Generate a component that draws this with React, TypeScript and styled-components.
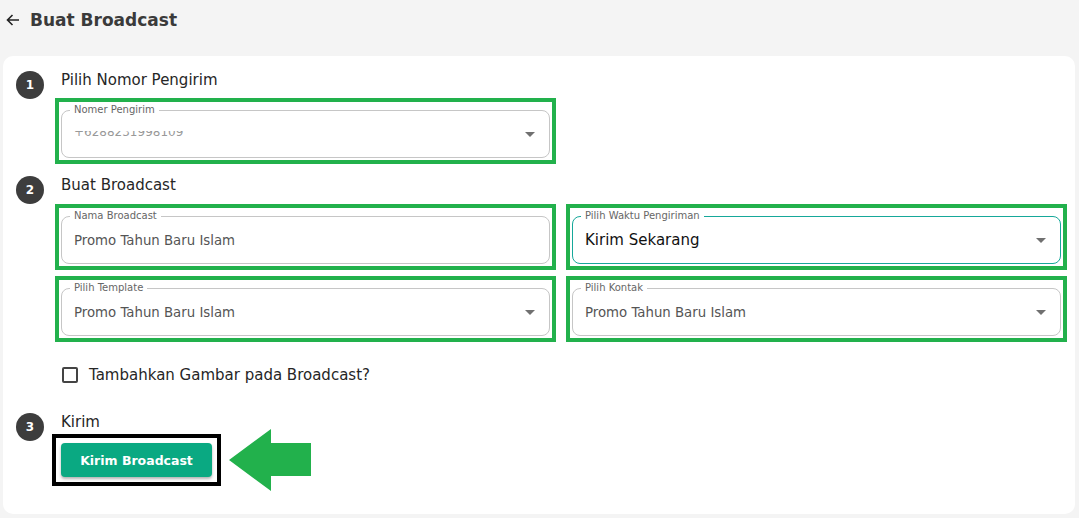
import styled, { createGlobalStyle } from "styled-components";

const GlobalStyle = createGlobalStyle`
    body {
        margin: 0;
        background: #f4f4f4;
        font-family: "DejaVu Sans", "Noto Sans", sans-serif;
        color: #333;
    }
`;

const Page = styled.div`
    width: 1079px;
    height: 518px;
    overflow: hidden;
`;

const Header = styled.header`
    height: 40px;
    display: flex;
    align-items: center;
    gap: 9px;
    padding-left: 5px;
`;

const Title = styled.h1`
    margin: 0;
    font-size: 17px;
    font-weight: 700;
    color: #3a3a3a;
`;

const Card = styled.section`
    margin: 16px 4px 0 3px;
    background: white;
    border-radius: 10px;
    padding: 15px 14px 37px 13px;
`;

const Step = styled.div<{ $gap?: number }>`
    display: grid;
    grid-template-columns: 28px 1fr;
    column-gap: 17px;
    margin-top: ${(p) => p.$gap ?? 0}px;
`;

const Circle = styled.div`
    width: 28px;
    height: 28px;
    border-radius: 50%;
    background: #3d3d3d;
    color: white;
    font-size: 12px;
    font-weight: 700;
    display: flex;
    align-items: center;
    justify-content: center;
`;

const StepTitle = styled.div`
    font-size: 15px;
    line-height: 18px;
    color: #262626;
`;

const Body = styled.div<{ $top: number }>`
    grid-column: 2;
    margin-top: ${(p) => p.$top}px;
`;

const Grid = styled.div`
    display: grid;
    grid-template-columns: 1fr 1fr;
    column-gap: 22px;
    row-gap: 18px;
`;

// green annotation frame drawn round a field
const Mark = styled.div`
    padding-top: 6px;
    outline: 4px solid #22b14c;
    outline-offset: 2px;
`;

const Field = styled.div<{ $focus?: boolean }>`
    position: relative;
    box-sizing: border-box;
    height: 48px;
    border: 1px solid ${(p) => (p.$focus ? "#16a89a" : "#c6c6c6")};
    border-radius: 8px;
    display: flex;
    align-items: center;
    padding: 0 12px;
`;

const Legend = styled.span`
    position: absolute;
    top: -7px;
    left: 8px;
    padding: 0 4px;
    background: white;
    font-size: 10px;
    line-height: 12px;
    color: #666;
    white-space: nowrap;
`;

const Value = styled.span<{ $strong?: boolean }>`
    flex: 1;
    font-size: ${(p) => (p.$strong ? 15 : 13.3)}px;
    color: ${(p) => (p.$strong ? "#111" : "#555")};
`;

const Clipped = styled.span`
    flex: 1;
    height: 8px;
    overflow: hidden;
    display: flex;
    align-items: flex-end;
    margin-top: 2px;
    font-size: 12px;
    line-height: 14px;
    color: #999;
`;

const Caret = styled.span`
    width: 0;
    height: 0;
    border-left: 5px solid transparent;
    border-right: 5px solid transparent;
    border-top: 5px solid #707070;
    margin-right: 2px;
`;

const CheckRow = styled.label`
    margin-top: 27px;
    height: 24px;
    display: flex;
    align-items: center;
    gap: 11px;
    font-size: 15px;
    color: #262626;
`;

const Box = styled.span`
    box-sizing: border-box;
    width: 16px;
    height: 16px;
    margin-left: 1px;
    border: 2px solid #444;
    border-radius: 2px;
`;

const SendRow = styled.div`
    display: flex;
    align-items: center;
    gap: 17px;

    svg {
        margin: -14px 0;
    }
`;

// black annotation frame round the button
const ButtonFrame = styled.div`
    display: flex;
    outline: 4px solid #000;
    outline-offset: 5px;
`;

const Button = styled.button`
    width: 151px;
    height: 34px;
    border: none;
    border-radius: 4px;
    background: #0aa982;
    color: white;
    font-family: inherit;
    font-size: 12.5px;
    font-weight: 700;
    box-shadow: 0 2px 3px rgba(0, 0, 0, 0.3);
`;

function Dropdown({ label, value, focus, strong }: { label: string; value: string; focus?: boolean; strong?: boolean }) {
    return (
        <Mark>
            <Field $focus={focus}>
                <Legend>{label}</Legend>
                <Value $strong={strong}>{value}</Value>
                <Caret />
            </Field>
        </Mark>
    );
}

function App() {
    return (
        <Page>
            <GlobalStyle />
            <Header>
                <svg width="16" height="16" viewBox="0 0 16 16" fill="none" stroke="#222" strokeWidth="1.6">
                    <path d="M14 8H2.5M7.5 3L2.5 8l5 5" />
                </svg>
                <Title>Buat Broadcast</Title>
            </Header>
            <Card>
                <Step>
                    <Circle>1</Circle>
                    <StepTitle>Pilih Nomor Pengirim</StepTitle>
                    <Body $top={5}>
                        <Grid>
                            <Mark>
                                <Field>
                                    <Legend>Nomer Pengirim</Legend>
                                    <Clipped>+6288231998109</Clipped>
                                    <Caret />
                                </Field>
                            </Mark>
                        </Grid>
                    </Body>
                </Step>
                <Step $gap={18}>
                    <Circle>2</Circle>
                    <StepTitle>Buat Broadcast</StepTitle>
                    <Body $top={6}>
                        <Grid>
                            <Mark>
                                <Field>
                                    <Legend>Nama Broadcast</Legend>
                                    <Value>Promo Tahun Baru Islam</Value>
                                </Field>
                            </Mark>
                            <Dropdown label="Pilih Waktu Pengiriman" value="Kirim Sekarang" focus strong />
                            <Dropdown label="Pilih Template" value="Promo Tahun Baru Islam" />
                            <Dropdown label="Pilih Kontak" value="Promo Tahun Baru Islam" />
                        </Grid>
                        <CheckRow>
                            <Box />
                            Tambahkan Gambar pada Broadcast?
                        </CheckRow>
                    </Body>
                </Step>
                <Step $gap={26}>
                    <Circle>3</Circle>
                    <StepTitle>Kirim</StepTitle>
                    <Body $top={2}>
                        <SendRow>
                            <ButtonFrame>
                                <Button>Kirim Broadcast</Button>
                            </ButtonFrame>
                            <svg width="82" height="62" viewBox="0 0 82 62">
                                <path d="M0 31L42 0V14H82V47H42V62Z" fill="#22b14c" />
                            </svg>
                        </SendRow>
                    </Body>
                </Step>
            </Card>
        </Page>
    );
}

export default App;
